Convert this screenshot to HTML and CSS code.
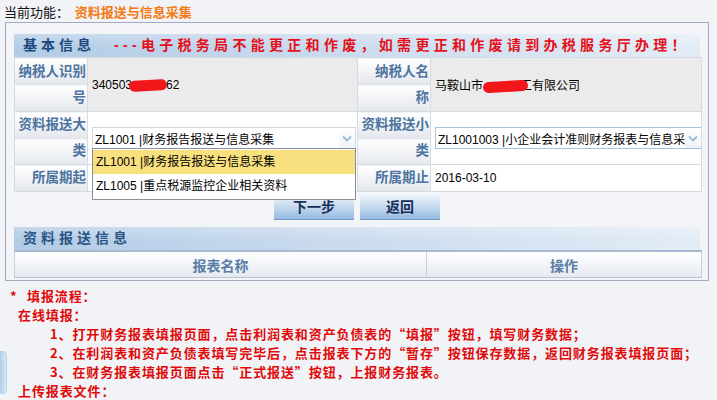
FILE: index.html
```html
<!DOCTYPE html>
<html lang="zh-CN">
<head>
<meta charset="utf-8">
<title>资料报送与信息采集</title>
<link rel="stylesheet" href="styles.css">
</head>
<body>
<div class="crumb">当前功能： <span class="crumb-cur">资料报送与信息采集</span></div>
<div class="panel">
  <div class="bar"><span class="bar-title">基本信息</span><span class="bar-warn">---电子税务局不能更正和作废，如需更正和作废请到办税服务厅办理！</span></div>
  <table class="form">
    <colgroup><col class="c-l1"><col class="c-v1"><col class="c-l2"><col class="c-v2"></colgroup>
    <tr class="r1">
      <th>纳税人识别号</th>
      <td class="grey">340503<span class="blot b1"></span>62</td>
      <th>纳税人名<br>称</th>
      <td class="grey">马鞍山市<span class="blot b2"></span>工有限公司</td>
    </tr>
    <tr class="r2">
      <th>资料报送大类</th>
      <td>
        <div class="sel-wrap">
          <div class="sel focus"><span class="sel-text">ZL1001 |财务报告报送与信息采集</span><span class="sel-arrow"><svg width="10" height="7" viewBox="0 0 10 7"><path d="M1 1.5 L5 5.5 L9 1.5" fill="none" stroke="#9bb8d6" stroke-width="1.8"/></svg></span></div>
          <ul class="drop">
            <li class="on">ZL1001 |财务报告报送与信息采集</li>
            <li>ZL1005 |重点税源监控企业相关资料</li>
          </ul>
        </div>
      </td>
      <th>资料报送小类</th>
      <td>
        <div class="sel sel2"><span class="sel-text">ZL1001003 |小企业会计准则财务报表与信息采集</span><span class="sel-arrow"><svg width="10" height="7" viewBox="0 0 10 7"><path d="M1 1.5 L5 5.5 L9 1.5" fill="none" stroke="#9bb8d6" stroke-width="1.8"/></svg></span></div>
      </td>
    </tr>
    <tr class="r3">
      <th>所属期起</th>
      <td></td>
      <th>所属期止</th>
      <td>2016-03-10</td>
    </tr>
  </table>
  <div class="btns">
    <button class="btn">下一步</button>
    <button class="btn">返回</button>
  </div>
  <div class="bar bar2"><span class="bar-title">资料报送信息</span></div>
  <table class="list">
    <colgroup><col class="c-name"><col class="c-op"></colgroup>
    <tr><th>报表名称</th><th>操作</th></tr>
  </table>
</div>
<div class="notes">
  <div class="n-head"><span class="star">*</span>填报流程：</div>
  <div class="n-sub">在线填报：</div>
  <div class="n-item">1、打开财务报表填报页面，点击利润表和资产负债表的“填报”按钮，填写财务数据；</div>
  <div class="n-item">2、在利润表和资产负债表填写完毕后，点击报表下方的“暂存”按钮保存数据，返回财务报表填报页面；</div>
  <div class="n-item">3、在财务报表填报页面点击“正式报送”按钮，上报财务报表。</div>
  <div class="n-sub">上传报表文件：</div>
</div>
<div class="side-tab"></div>
</body>
</html>
```
FILE: styles.css
```css
html, body {
  margin: 0;
  padding: 0;
}
body {
  background: #f2f3f7;
  font-family: "Liberation Sans", "Noto Sans CJK SC", sans-serif;
  font-size: 13px;
  color: #000;
  width: 717px;
  height: 400px;
  overflow: hidden;
  position: relative;
}
.crumb {
  height: 22px;
  line-height: 25px;
  padding-left: 4px;
  font-size: 13px;
  color: #111;
}
.crumb-cur {
  color: #f27a12;
  font-weight: bold;
  margin-left: 2px;
}
.panel {
  width: 686px;
  margin-left: 5px;
  border: 1px solid #a3abc0;
  padding: 11px 8px 1px 8px;
  background: #f3f4f8;
}
.bar {
  height: 23px;
  line-height: 23px;
  background: linear-gradient(to bottom, rgba(255,255,255,0.25), rgba(255,255,255,0) 60%), linear-gradient(to right, #b2cbe6 0%, #c9daee 45%, #e3ecf6 100%);
  white-space: nowrap;
  overflow: hidden;
}
.bar-title {
  font-size: 14px;
  font-weight: bold;
  color: #1e4a7e;
  letter-spacing: 4px;
  padding-left: 9px;
}
.bar-warn {
  font-size: 14px;
  font-weight: bold;
  color: #e4101a;
  letter-spacing: 4.3px;
  margin-left: 19px;
}
.form {
  width: 687px;
  border-collapse: collapse;
  table-layout: fixed;
}
.c-l1 { width: 73px; }
.c-v1 { width: 270px; }
.c-l2 { width: 73px; }
.c-v2 { width: 271px; }
.form th, .form td {
  border: 1px solid #d6dbe3;
  padding: 0;
}
.form th {
  font-size: 13.5px;
  font-weight: bold;
  color: #4d74a0;
  text-align: right;
  line-height: 26px;
  padding: 0 1px;
  background: linear-gradient(to bottom, #ffffff, #e2e6ec);
  background-size: 100% 27px;
  word-break: break-all;
}
.form td {
  background: #fff;
  padding-left: 4px;
  font-size: 12px;
  vertical-align: middle;
}
.form td.grey {
  background: #ebebeb;
}
.r1 { height: 54px; }
.r2 { height: 53px; }
.r3 { height: 27px; }
.blot {
  display: inline-block;
  vertical-align: middle;
  height: 11px;
  background: #f0161a;
  border-radius: 6px;
  transform: rotate(-3deg);
}
.b1 { width: 38px; margin: 0 -1px 0 -3px; }
.b2 { width: 45px; margin: 0 -8px 0 0; }
.sel-wrap {
  position: relative;
}
.sel {
  display: flex;
  align-items: center;
  height: 20px;
  border: 1px solid #d2d8e2;
  background: #fff;
  width: 262px;
  font-size: 12px;
  overflow: hidden;
}
.sel2 {
  width: 265px;
  border-color: #a9c0dc;
}
.sel-text {
  flex: 1;
  white-space: nowrap;
  overflow: hidden;
  padding-left: 2px;
}
.sel-arrow {
  width: 16px;
  height: 20px;
  display: flex;
  align-items: center;
  justify-content: center;
  background: linear-gradient(to bottom, #ffffff, #eef3f9);
}
.drop {
  position: absolute;
  left: 0;
  top: 21px;
  width: 262px;
  margin: 0;
  padding: 1px 0 1px;
  list-style: none;
  background: #fff;
  border: 1px solid #8a8f99;
  z-index: 5;
}
.drop li {
  height: 24px;
  line-height: 24px;
  padding-left: 3px;
  font-size: 12px;
  white-space: nowrap;
}
.drop li.on {
  background: #f8e07e;
}
.btns {
  display: flex;
  justify-content: center;
  gap: 6px;
  height: 35px;
}
.btn {
  width: 80px;
  height: 28px;
  border: none;
  border-bottom: 1px solid #6f98c8;
  background: linear-gradient(to bottom, #f6f9fd 0%, #d4e3f3 40%, #96bae0 100%);
  font-family: "Noto Sans CJK SC", sans-serif;
  font-size: 14px;
  font-weight: bold;
  color: #182f58;
  padding: 0;
}
.bar2 .bar-title {
  color: #2a5584;
}
.list {
  width: 687px;
  border-collapse: collapse;
  table-layout: fixed;
  margin-bottom: 1px;
}
.c-name { width: 412px; }
.c-op { width: 275px; }
.list th {
  height: 25px;
  border-top: 2px solid #a6bbd2;
  border-bottom: 1px solid #b9c3d2;
  border-left: 1px solid #c8d1dc;
  border-right: 1px solid #c8d1dc;
  background: linear-gradient(to bottom, #ffffff, #e5e9ef);
  font-size: 14px;
  font-weight: bold;
  color: #587ea8;
  text-align: center;
  padding: 0;
}
.notes {
  color: #e00a0a;
  font-weight: bold;
  font-size: 13px;
  letter-spacing: 0.9px;
  line-height: 19px;
  padding-top: 5px;
  font-family: "Noto Sans CJK SC", sans-serif;
}
.n-head {
  padding-left: 10px;
}
.star {
  display: inline-block;
  width: 17px;
}
.n-sub {
  padding-left: 18px;
}
.n-item {
  padding-left: 50px;
  white-space: nowrap;
}
.side-tab {
  position: absolute;
  left: -4px;
  top: 351px;
  width: 9px;
  height: 41px;
  border-radius: 4px;
  background: linear-gradient(to right, #9cc2e4, #d6e8f6);
  border: 1px solid #b8d2ea;
}
```
